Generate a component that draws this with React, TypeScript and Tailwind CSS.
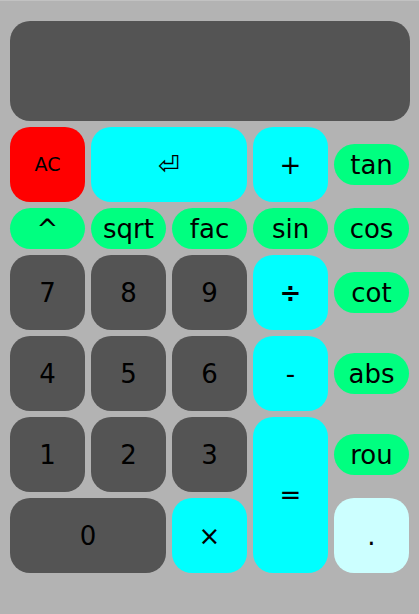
import React from 'react';

type Key = {
  label: string;
  cls: string;
  pill?: boolean;
  text?: string;
};

const dark = 'bg-[#545454]';
const cyan = 'bg-[#00ffff]';
const green = 'bg-[#00ff80]';

function Btn({ label, cls, pill, text }: Key) {
  if (pill) {
    return (
      <div className={`flex items-center ${cls}`}>
        <button className={`w-full h-[41px] rounded-full ${green} text-[26px] leading-none text-black flex items-center justify-center`}>
          {label}
        </button>
      </div>
    );
  }
  return (
    <button className={`rounded-[20px] flex items-center justify-center text-black leading-none ${text ?? 'text-[26px]'} ${cls}`}>
      {label}
    </button>
  );
}

export default function App() {
  return (
    <div className="w-[419px] h-[614px] bg-[#b3b3b3] border-t border-[#c2c2c2] pt-[20px] px-[10px]" style={{ fontFamily: '"DejaVu Sans", sans-serif' }}>
      <div className="h-[100px] w-[400px] rounded-[20px] bg-[#545454]" />
      <div className="mt-[6px] grid grid-cols-[repeat(5,75px)] grid-rows-[75px_41px_75px_75px_75px_75px] gap-[6px]">
        <Btn label="AC" cls="bg-[#ff0000] col-start-1 row-start-1" text="text-[19px]" />
        <Btn label="⏎" cls={`${cyan} col-start-2 col-span-2 row-start-1`} />
        <Btn label="+" cls={`${cyan} col-start-4 row-start-1`} />
        <Btn label="tan" pill cls="col-start-5 row-start-1" />

        <Btn label="^" pill cls="col-start-1 row-start-2" />
        <Btn label="sqrt" pill cls="col-start-2 row-start-2" />
        <Btn label="fac" pill cls="col-start-3 row-start-2" />
        <Btn label="sin" pill cls="col-start-4 row-start-2" />
        <Btn label="cos" pill cls="col-start-5 row-start-2" />

        <Btn label="7" cls={`${dark} col-start-1 row-start-3`} />
        <Btn label="8" cls={`${dark} col-start-2 row-start-3`} />
        <Btn label="9" cls={`${dark} col-start-3 row-start-3`} />
        <Btn label="÷" cls={`${cyan} col-start-4 row-start-3 font-bold`} />
        <Btn label="cot" pill cls="col-start-5 row-start-3" />

        <Btn label="4" cls={`${dark} col-start-1 row-start-4`} />
        <Btn label="5" cls={`${dark} col-start-2 row-start-4`} />
        <Btn label="6" cls={`${dark} col-start-3 row-start-4`} />
        <Btn label="-" cls={`${cyan} col-start-4 row-start-4`} />
        <Btn label="abs" pill cls="col-start-5 row-start-4" />

        <Btn label="1" cls={`${dark} col-start-1 row-start-5`} />
        <Btn label="2" cls={`${dark} col-start-2 row-start-5`} />
        <Btn label="3" cls={`${dark} col-start-3 row-start-5`} />
        <Btn label="=" cls={`${cyan} col-start-4 row-start-5 row-span-2`} />
        <Btn label="rou" pill cls="col-start-5 row-start-5" />

        <Btn label="0" cls={`${dark} col-start-1 col-span-2 row-start-6`} />
        <Btn label="×" cls={`${cyan} col-start-3 row-start-6`} />
        <Btn label="." cls="bg-[#ccffff] col-start-5 row-start-6" />
      </div>
    </div>
  );
}
